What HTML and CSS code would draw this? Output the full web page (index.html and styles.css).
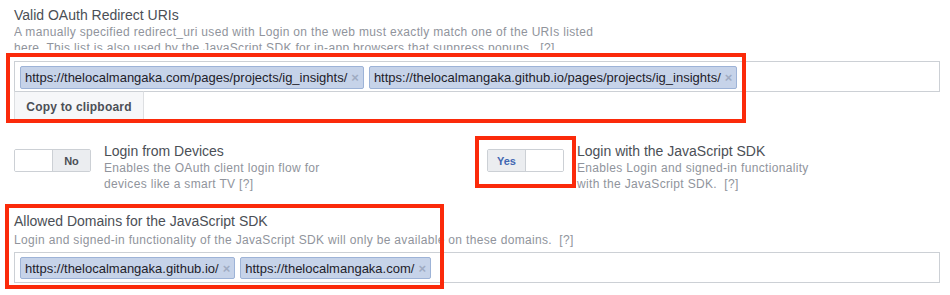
FILE: index.html
```html
<!DOCTYPE html>
<html>
<head>
<meta charset="utf-8">
<link rel="stylesheet" href="styles.css">
</head>
<body>
<div class="page">
  <section class="field">
    <div class="title">Valid OAuth Redirect URIs</div>
    <div class="desc desc-clip">A manually specified redirect_uri used with Login on the web must exactly match one of the URIs listed here. This list is also used by the JavaScript SDK for in-app browsers that suppress popups.&nbsp; [?]</div>
    <div class="tokens tokens-top">
      <span class="token">https://thelocalmangaka.com/pages/projects/ig_insights/<span class="x">×</span></span>
      <span class="token">https://thelocalmangaka.github.io/pages/projects/ig_insights/<span class="x">×</span></span>
    </div>
    <button class="copy">Copy to clipboard</button>
  </section>

  <section class="toggles">
    <div class="toggle-row">
      <div class="switch"><span class="half blank"></span><span class="half on">No</span></div>
      <div class="toggle-text">
        <div class="title">Login from Devices</div>
        <div class="desc narrow">Enables the OAuth client login flow for devices like a smart TV [?]</div>
      </div>
    </div>
    <div class="toggle-row">
      <div class="switch"><span class="half on yes">Yes</span><span class="half blank"></span></div>
      <div class="toggle-text">
        <div class="title">Login with the JavaScript SDK</div>
        <div class="desc narrow">Enables Login and signed-in functionality with the JavaScript SDK.&nbsp; [?]</div>
      </div>
    </div>
  </section>

  <section class="field field-domains">
    <div class="title">Allowed Domains for the JavaScript SDK</div>
    <div class="desc desc-gap">Login and signed-in functionality of the JavaScript SDK will only be available on these domains.&nbsp; [?]</div>
    <div class="tokens tokens-bottom">
      <span class="token">https://thelocalmangaka.github.io/<span class="x">×</span></span>
      <span class="token">https://thelocalmangaka.com/<span class="x">×</span></span>
    </div>
  </section>
</div>

<div class="mark mark-uris"></div>
<div class="mark mark-sdk"></div>
<div class="mark mark-domains"></div>
</body>
</html>
```

FILE: styles.css
```css
html, body {
  margin: 0;
  padding: 0;
  background: #ffffff;
}

body {
  font-family: "Liberation Sans", Arial, sans-serif;
  color: #4b4f56;
  width: 950px;
  height: 295px;
  overflow: hidden;
  position: relative;
}

.page {
  padding: 6px 10px 0 14px;
}

.title {
  font-size: 14px;
  line-height: 18px;
  color: #4b4f56;
}

.desc {
  font-size: 12px;
  line-height: 16px;
  letter-spacing: 0.33px;
  color: #90949c;
}

.desc-clip {
  max-width: 595px;
  height: 26px;
  overflow: hidden;
}

.desc-gap {
  margin-top: 2px;
}

.tokens {
  box-sizing: border-box;
  height: 31px;
  border: 1px solid #ccd0d5;
  background: #fff;
  padding: 4px 5px 3px 5px;
  display: flex;
  align-items: flex-start;
  gap: 5px;
}

.tokens-top {
  margin-top: 11px;
}

.tokens-bottom {
  margin-top: 4px;
}

.tokens-bottom .token {
  height: 22px;
}

.token {
  box-sizing: border-box;
  height: 23px;
  display: inline-flex;
  align-items: center;
  padding: 0 4px 0 4px;
  background: #c6d3e9;
  border: 1px solid #9db3d7;
  border-radius: 2px;
  font-size: 13px;
  color: #1d2129;
  white-space: nowrap;
}

.x {
  margin-left: 4px;
  font-size: 13px;
  font-weight: bold;
  color: #9fabc2;
}

.copy {
  display: block;
  box-sizing: border-box;
  margin: -1px 0 0 0;
  width: 130px;
  height: 31px;
  padding: 0;
  background: #f6f7f9;
  border: 1px solid #dddfe2;
  border-top-color: #ccd0d5;
  font-family: "Liberation Sans", Arial, sans-serif;
  font-size: 12px;
  font-weight: bold;
  letter-spacing: 0.2px;
  color: #4b4f56;
}

.toggles {
  margin-top: 20px;
  display: grid;
  grid-template-columns: 453px 453px;
  column-gap: 20px;
}

.toggle-row {
  display: flex;
  gap: 13px;
}

.switch {
  box-sizing: border-box;
  margin-top: 7px;
  width: 77px;
  height: 23px;
  border: 1px solid #ccd0d5;
  border-radius: 2px;
  display: flex;
  overflow: hidden;
  flex: none;
}

.half {
  flex: 1;
  display: flex;
  align-items: center;
  justify-content: center;
  font-size: 11px;
  font-weight: bold;
}

.half.blank {
  background: #fff;
}

.half.on {
  background: #ebedf0;
  color: #4b4f56;
}

.switch .half + .half {
  border-left: 1px solid #ccd0d5;
}

.half.yes {
  color: #4267b2;
}

.narrow {
  max-width: 245px;
}

.field-domains {
  margin-top: 20px;
}

.mark {
  position: absolute;
  box-sizing: border-box;
  border: 4px solid #fb2a0a;
}

.mark-uris {
  left: 6px;
  top: 53px;
  width: 740px;
  height: 70px;
}

.mark-sdk {
  left: 475px;
  top: 136px;
  width: 101px;
  height: 52px;
}

.mark-domains {
  left: 5px;
  top: 204px;
  width: 439px;
  height: 85px;
}
```
